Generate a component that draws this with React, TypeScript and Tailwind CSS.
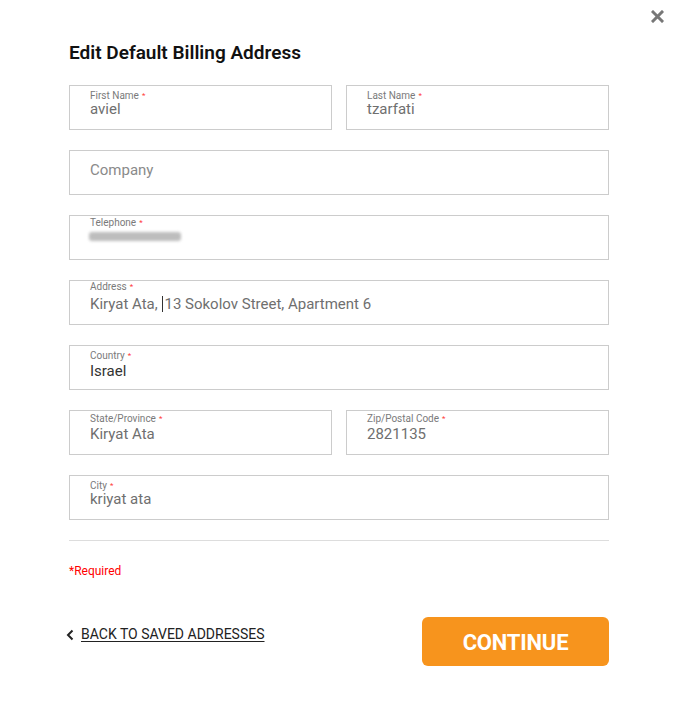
import React from "react";

function Field({
  label,
  value,
  dark,
  pt = "pt-[4px]",
  children,
}: {
  label: string;
  value?: string;
  dark?: boolean;
  pt?: string;
  children?: React.ReactNode;
}) {
  return (
    <div className={`h-[45px] border border-[#cccccc] px-[20px] ${pt}`}>
      <div className="text-[10px] leading-[12px] text-[#7a7a7a]">
        {label}
        <span className="text-[#ff3b3b] ml-[3px] text-[8px] align-top">*</span>
      </div>
      {children ?? (
        <div
          className={`text-[15px] leading-[14px] ${dark ? "text-[#333333]" : "text-[#6f6f6f]"}`}
        >
          {value}
        </div>
      )}
    </div>
  );
}

export default function App() {
  return (
    <div
      className="relative w-[679px] h-[710px] bg-white"
      style={{ fontFamily: "Roboto, 'Liberation Sans', sans-serif" }}
    >
      <button className="absolute left-[650px] top-[9px] w-[14px] h-[14px] flex items-center justify-center">
        <svg width="13" height="13" viewBox="0 0 13 13">
          <path d="M2 2 L11 11 M11 2 L2 11" stroke="#777777" strokeWidth="3" strokeLinecap="square" />
        </svg>
      </button>

      <div className="pl-[69px] pr-[70px] pt-[41px]">
        <h1 className="text-[19px] leading-[24px] font-semibold text-[#111111]">
          Edit Default Billing Address
        </h1>

        <div className="mt-[20px] flex flex-col gap-[20px]">
          <div className="grid grid-cols-2 gap-[14px]">
            <Field label="First Name" value="aviel" />
            <Field label="Last Name" value="tzarfati" />
          </div>
          <div className="h-[45px] border border-[#cccccc] px-[20px] flex items-center">
            <span className="text-[15px] text-[#8a8a8a] -mt-[4px]">Company</span>
          </div>
          <Field label="Telephone" pt="pt-[1px]">
            <div className="mt-[3px] ml-[-1px] h-[9px] w-[92px] rounded-[3px] bg-[#bdbdbd] blur-[1.5px]" />
          </Field>
          <Field label="Address" pt="pt-[0px]">
            <div className="mt-[3px] text-[15px] leading-[14px] text-[#6f6f6f]">
              Kiryat Ata,{" "}
              <span className="inline-block w-[1px] h-[16px] bg-[#333] align-[-3px] ml-[1px] mr-[1px]" />
              13 Sokolov Street, Apartment 6
            </div>
          </Field>
          <Field label="Country" value="Israel" dark pt="pt-[4px]">
            <div className="mt-[2px] text-[15px] leading-[14px] text-[#333333]">Israel</div>
          </Field>
          <div className="grid grid-cols-2 gap-[14px]">
            <Field label="State/Province" value="Kiryat Ata" pt="pt-[2px]">
              <div className="mt-[2px] text-[15px] leading-[14px] text-[#6f6f6f]">Kiryat Ata</div>
            </Field>
            <Field label="Zip/Postal Code" value="2821135" pt="pt-[2px]">
              <div className="mt-[2px] text-[15px] leading-[14px] text-[#6f6f6f]">2821135</div>
            </Field>
          </div>
          <Field label="City" value="kriyat ata" />
        </div>

        <div className="mt-[20px] border-t border-[#dddddd]" />

        <div className="mt-[23px] text-[12px] leading-[14px] text-[#ff0000]">*Required</div>

        <div className="mt-[39px] flex items-center justify-between">
          <a className="flex items-center gap-[6px] -mt-[14px] -ml-[3px] text-[14px] text-[#222222] cursor-pointer">
            <svg width="9" height="12" viewBox="0 0 9 12">
              <path d="M6.5 1.5 L2 6 L6.5 10.5" stroke="#222" strokeWidth="2" fill="none" />
            </svg>
            <span className="underline underline-offset-[2px]">BACK TO SAVED ADDRESSES</span>
          </a>
          <button className="w-[187px] h-[49px] rounded-[6px] bg-[#f7941d] text-white text-[22px] font-bold tracking-[-0.2px] pt-[1px]">
            CONTINUE
          </button>
        </div>
      </div>
    </div>
  );
}
